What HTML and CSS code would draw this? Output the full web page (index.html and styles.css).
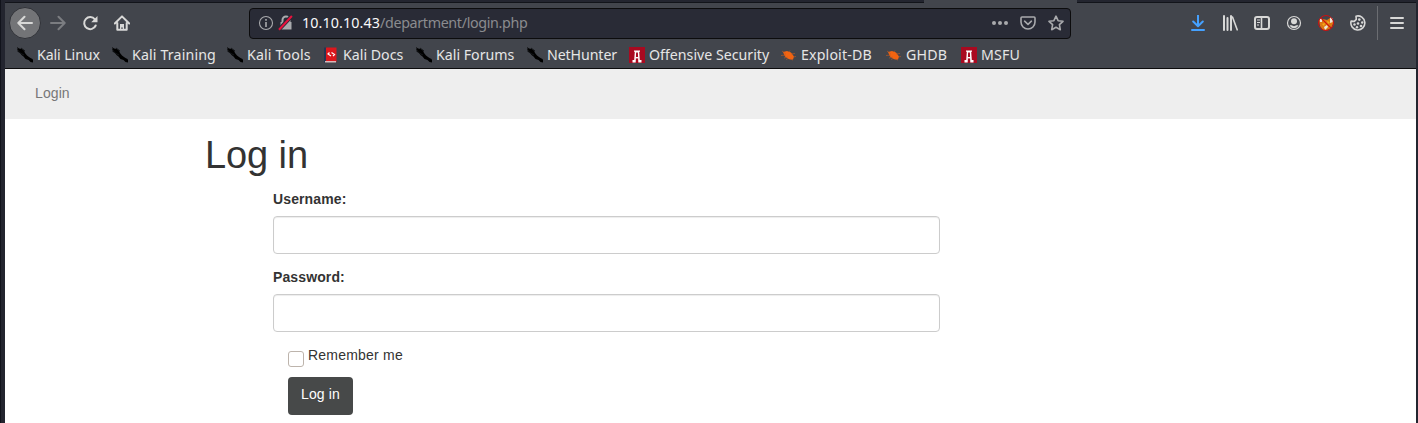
FILE: index.html
```html
<!DOCTYPE html>
<html lang="en">
<head>
<meta charset="utf-8">
<title>Login</title>
<link rel="stylesheet" href="styles.css">
</head>
<body>
<svg class="defs" width="0" height="0">
  <symbol id="kali" viewBox="0 0 16 16"><path d="M0 0l2 1.500 3 .5 2 1.500 1 2.500 2 2.500 2 1.500 1.500 1 2 1 1 2v1.500l-3-.5-2-2-3-1-2-2.500-2-1.500-1-1.500-3-2L1 3z" fill="#000"/><path d="M0 2l3 4M4 1l4 3M3 6l4 2" stroke="#15171a" stroke-width="1"/></symbol>
  <symbol id="offsec" viewBox="0 0 16 16"><path d="M0 0h16v16H0z" fill="#a90a20"/><path d="M5 3.500h6v1.300h-.8l.6 8.200h1.700v2.500H9.300L8.900 5.500H7.100l-.4 10H3.500V13h1.700l.6-8.200H5z" fill="#fff"/><path d="M6.500 10h3v1.400h-3z" fill="#fff"/></symbol>
  <symbol id="bug" viewBox="0 0 16 16"><path d="M2 5l4-1 4 1.500 3 4-1 3-4-.3-4-2.700z" fill="#f26411"/><path d="M1 4l4 3M0 8.500l5-.5M8 5l1-1.500M10 7l4-.5M12 10l3-.5M3 11l4-1M9 12l3 1M5 12.500l2-1" stroke="#c85a20" stroke-width=".6"/></symbol>
</svg>
<div class="window">
  <div class="tabs"><span class="tab-active"></span></div>
  <header class="chrome">
    <div class="toolbar">
      <div class="nav-buttons">
        <span class="back"><svg viewBox="0 0 16 16"><path d="M15 8H1.500M7.500 1.700L1.300 8l6.200 6.300" class="line"/></svg></span>
        <svg class="dim" viewBox="0 0 16 16"><path d="M1 8h13.500M8.500 1.700L14.700 8l-6.200 6.300" class="line"/></svg>
        <svg viewBox="0 0 16 16"><path d="M12.900 4.400A6 6 0 1 0 13.700 10.500" class="line"/><path d="M15.500 1v6.300H9.200z" fill="currentColor"/></svg>
        <svg viewBox="0 0 16 16"><path d="M.8 8.500L8 1.400l7.200 7.100M3.300 8v6.800h9.400V8" class="line"/><path d="M6 9h4v6H8.800v-2.500H7.200V15H6z" fill="currentColor"/></svg>
      </div>
      <div class="urlbar">
        <svg viewBox="0 0 16 16"><circle cx="8" cy="8" r="6.500" fill="none" stroke="currentColor" stroke-width="1.100"/><path d="M7.200 4h1.600v1.700H7.200zM7.200 7h1.600v5H7.200z" fill="currentColor"/></svg>
        <svg class="lock" viewBox="0 0 16 16"><path d="M4.500 7V5a3.500 3.500 0 0 1 7 0v2" class="line"/><path d="M2.500 7h11v7.500h-11z" fill="currentColor"/><path d="M.8 14.700L13.300 1.300" stroke="#292b36" stroke-width="4"/><path d="M1 14.800L13.900 1" stroke="#e9123e" stroke-width="2"/></svg>
        <span class="url"><b>10.10.10.43</b>/department/login.php</span>
        <div class="page-actions">
          <svg viewBox="0 0 16 16"><g fill="currentColor"><circle cx="2" cy="8" r="2"/><circle cx="8" cy="8" r="2"/><circle cx="14" cy="8" r="2"/></g></svg>
          <svg viewBox="0 0 16 16"><path d="M2 2h12q1 0 1 1v4a7 7 0 0 1-14 0V3q0-1 1-1z" class="line thin"/><path d="M4.600 6.200L8 9.300l3.400-3.100" class="line thin"/></svg>
          <svg viewBox="0 0 16 16"><path d="M8 1.200l2.100 4.500 4.900.6-3.600 3.400.9 5L8 12.300l-4.300 2.400.9-5L1 6.300l4.900-.6z" class="line thin"/></svg>
        </div>
      </div>
      <div class="tools">
        <svg class="download" viewBox="0 0 16 16"><path d="M8 .5V11M3.200 6.500L8 11.200l4.800-4.700M2 15h12" class="line"/></svg>
        <svg viewBox="0 0 16 16"><path d="M2 1v14M5.500 3v12M9 1v14" class="line"/><path d="M10.500 2l4.700 12.800" class="line thin"/></svg>
        <svg viewBox="0 0 16 16"><rect x="1" y="2" width="14" height="12" rx="2" class="line"/><path d="M7.500 2v12" class="line thin"/><path d="M3 5h3M3 7.500h3M3 10h2" stroke="currentColor" stroke-width="1"/></svg>
        <svg viewBox="0 0 16 16"><circle cx="8" cy="8" r="6.500" fill="none" stroke="currentColor" stroke-width="1.200"/><circle cx="8" cy="6.200" r="3" fill="currentColor"/><path d="M3.500 10.200h2L8 11.300l2.500-1.100h2Q11 13.200 8 13.200T3.500 10.200z" fill="currentColor"/></svg>
        <svg viewBox="0 0 16 16"><path d="M1 5l4-1 4 1 3-2 3 1v5l-2 4-4 2H5l-3-4z" fill="#dd7911"/><path d="M1.500 4l2.500-1v4L2 7zM12 2l3 2v3l-3 1zM6 12l3-2 1 2-3 3z" fill="#eee5d7"/><path d="M9 6l3 1-2 2zM4 9l3-1-1 3z" fill="#f6ad1a"/><circle cx="8" cy="8" r="7.500" fill="none" stroke="#cf1010"/><path d="M2.800 2.800l10.400 10.400" stroke="#cf1010" stroke-width="1.200"/></svg>
        <svg viewBox="0 0 16 16"><path d="M6 1.200a7 7 0 1 1-4.900 4.900l3.200.3 2-2z" class="line thin"/><g fill="currentColor"><circle cx="9.300" cy="4.600" r="1.300"/><circle cx="12.200" cy="7.500" r="1.200"/><circle cx="8" cy="8.500" r="1.300"/><circle cx="4.500" cy="9.500" r="1.200"/><circle cx="11" cy="11" r="1.300"/><circle cx="7" cy="12.200" r="1.200"/></g></svg>
      </div>
      <div class="menu"><svg viewBox="0 0 16 16"><path d="M2 3h12M2 8h12M2 13h12" class="line"/></svg></div>
    </div>
    <nav class="bookmarks">
      <a class="tight"><svg><use href="#kali"/></svg>Kali Linux</a>
      <a class="loose"><svg><use href="#kali"/></svg>Kali Training</a>
      <a class="loose"><svg><use href="#kali"/></svg>Kali Tools</a>
      <a><svg viewBox="0 0 16 16"><path d="M1 .5h3v15H1z" fill="#263653"/><path d="M3 .5h10.500V15H3z" fill="#dc171d"/><path d="M2 14h11v1.500H2z" fill="#d8b9b9"/><path d="M6.500 5.500L5 7l3 2M8.500 5.500l3 2L10 9" stroke="#fff" stroke-width="1.200" fill="none"/></svg>Kali Docs</a>
      <a><svg><use href="#kali"/></svg>Kali Forums</a>
      <a class="tight"><svg><use href="#kali"/></svg>NetHunter</a>
      <a><svg><use href="#offsec"/></svg>Offensive Security</a>
      <a class="loose"><svg><use href="#bug"/></svg>Exploit-DB</a>
      <a class="loose"><svg><use href="#bug"/></svg>GHDB</a>
      <a class="loose"><svg><use href="#offsec"/></svg>MSFU</a>
    </nav>
  </header>
  <main class="page">
    <nav class="site-nav"><a>Login</a></nav>
    <form class="login">
      <h1>Log in</h1>
      <div class="fields">
        <label class="field-label" for="username">Username:</label>
        <input class="field" id="username" type="text">
        <label class="field-label" for="password">Password:</label>
        <input class="field" id="password" type="password">
        <label class="remember"><input class="check" type="checkbox"><span>Remember me</span></label>
        <button class="submit" type="button">Log in</button>
      </div>
    </form>
  </main>
</div>
</body>
</html>
```
FILE: styles.css
```css
* { box-sizing: border-box; }
body { margin: 0; height: 423px; overflow: hidden; background: #23252f; font-family: "Liberation Sans", Arial, sans-serif; }
.defs { display: block; height: 0; }
.window { height: 423px; padding: 0 2px 0 4px; border-left: 1px solid #11131b; }
.tabs { height: 3px; padding-left: 919px; border-bottom: 1px solid #12141a; background: #23252f; }
.tab-active { display: block; width: 153px; height: 3px; background: #42454c; }
.chrome { height: 66px; background: #42454c; border-bottom: 1px solid #0c0c0d; color: #d8d8d7; font-family: "Noto Sans", sans-serif; }
.chrome svg { display: block; flex: none; width: 16px; height: 16px; }
.line { fill: none; stroke: currentColor; stroke-width: 2; stroke-linecap: round; stroke-linejoin: round; }
.thin { stroke-width: 1.6; }
.toolbar { display: flex; align-items: center; height: 40px; padding-left: 4px; }
.nav-buttons { display: flex; align-items: center; gap: 16px; width: 240px; }
.back { display: grid; place-items: center; width: 32px; height: 32px; margin-right: -7px; border: 1px solid #303238; border-radius: 50%; background: #737477; }
.dim { color: #7b7d81; }
.urlbar { display: flex; align-items: center; width: 822px; height: 31px; padding: 0 6px 0 8px; border: 1px solid #0c0c0d; border-radius: 4px; background: #292b36; color: #a9aaad; }
.lock { margin-left: 4px; }
.url { margin-left: 8px; color: #8b8c8f; font-size: 14.3px; line-height: 28px; letter-spacing: -0.35px; }
.url b { color: #f9f9fa; font-weight: 400; letter-spacing: 0.1px; }
.page-actions { display: flex; gap: 12px; margin-left: auto; }
.tools { display: flex; gap: 16px; margin-left: 119px; }
.download { color: #45a1ff; }
.menu { display: flex; align-items: center; height: 34px; margin-left: 11px; padding-left: 11px; border-left: 1px solid #6b6d72; }
.bookmarks { display: grid; grid-template-columns: 95px 115px 96px 93px 111px 102px 152px 105px 75px 80px; padding-left: 12px; }
.bookmarks a { display: flex; align-items: center; gap: 4px; height: 24px; font-size: 14.2px; line-height: 24px; white-space: nowrap; color: #e6e6e6; }
.bookmarks .tight { letter-spacing: -0.1px; }
.bookmarks .loose { letter-spacing: 0.15px; }
.page { height: 354px; background: #fff; color: #333; font-size: 14px; }
.site-nav { height: 50px; padding: 14px 30px; background: #eee; color: #777; line-height: 20px; letter-spacing: 0.1px; }
.login { padding: 16px 0 0 200px; }
h1 { margin: 0; font-size: 38px; font-weight: 400; line-height: 40px; letter-spacing: -0.1px; }
.fields { display: flex; flex-direction: column; width: 667px; margin-left: 68px; padding-top: 14px; }
.field-label { margin-bottom: 7px; font-weight: 700; line-height: 20px; letter-spacing: 0.12px; }
.field { height: 38px; margin: 0 0 13px; border: 1px solid #ccc; border-radius: 4px; box-shadow: inset 0 1px 1px rgba(0,0,0,.075); }
.remember { display: flex; gap: 4px; height: 32px; padding-left: 15px; line-height: 20px; letter-spacing: 0.22px; }
.check { appearance: none; width: 16px; height: 16px; margin: 6px 0 0; border: 1px solid #bdb4ac; border-radius: 3px; background: #fff; }
.submit { width: 65px; height: 38px; margin: 0 0 0 15px; padding: 0 0 4px; border: 0; border-radius: 4px; background: #474949; color: #fff; font: 14px "Liberation Sans", sans-serif; letter-spacing: 0.15px; }
```
